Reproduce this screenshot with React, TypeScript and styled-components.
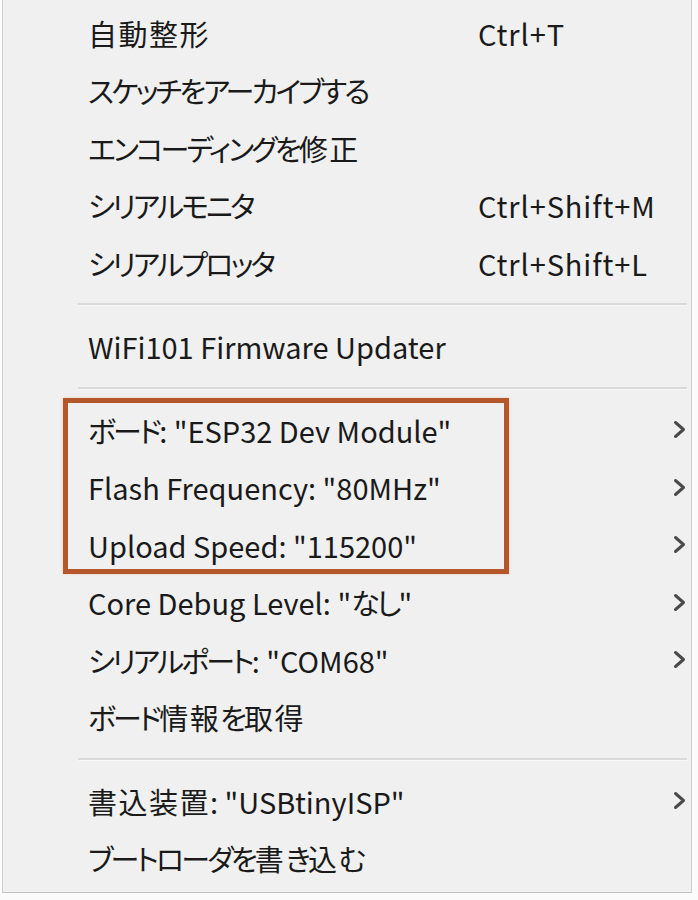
import React from "react";
import styled, { createGlobalStyle } from "styled-components";

const Global = createGlobalStyle`
  html, body { margin: 0; padding: 0; background: #fbfbfb; }
  body { font-family: "Noto Sans CJK JP", "Noto Sans", sans-serif; }
`;

const Menu = styled.div`
  margin-left: 2px;
  width: 690px;
  height: 893px;
  box-sizing: border-box;
  background: #f0f0f0;
  border-left: 1px solid #cfcfcf;
  border-right: 1px solid #cfcfcf;
  border-bottom: 1px solid #c4c4c4;
  padding-top: 4px;
  display: flex;
  flex-direction: column;
`;

const Row = styled.div`
  display: grid;
  grid-template-columns: 390px 1fr 30px;
  align-items: center;
  height: 57.5px;
  padding-left: 85px;
  font-size: 29px;
  color: #1a1a1a;
  font-feature-settings: "palt";
`;

const Label = styled.span`
  white-space: nowrap;
`;

const Run = styled.span<{ $kind: "kana" | "kanji" | "latin" }>`
  letter-spacing: ${(p) => (p.$kind === "kana" ? "-2.8px" : p.$kind === "kanji" ? "1.5px" : "0")};
`;

const Shortcut = styled.span`
  white-space: nowrap;
  letter-spacing: 0.9px;
`;

const Arrow = styled.span`
  display: flex;
  align-items: center;
  justify-content: flex-start;
  padding-left: 11px;
`;

const Separator = styled.div`
  height: 26px;
  display: flex;
  align-items: center;
  padding-left: 75px;
  padding-right: 4px;
  &::after {
    content: "";
    flex: 1;
    height: 2px;
    background: #d9d9d9;
    border-bottom: 1px solid #f7f7f7;
  }
`;

const Group = styled.div`
  position: relative;
`;

const Highlight = styled.div`
  position: absolute;
  left: 60px;
  top: -3px;
  width: 446px;
  height: 176px;
  box-sizing: border-box;
  border: 5px solid #b4582c;
  box-shadow: 0 0 2px rgba(240, 150, 100, 0.5);
  pointer-events: none;
`;

const Chevron = () => (
  <svg width="15" height="19" viewBox="0 0 15 19">
    <path d="M3.5 2.5 L11.5 9.5 L3.5 16.5" fill="none" stroke="#4a4a4a" strokeWidth="3" strokeLinecap="round" strokeLinejoin="round" />
  </svg>
);

const splitRuns = (text: string) => {
  const parts = text.match(/[\u3040-\u30ff]+|[\u4e00-\u9fff]+|[^\u3040-\u30ff\u4e00-\u9fff]+/g) ?? [];
  return parts.map((p, i) => {
    const kind = /[\u3040-\u30ff]/.test(p) ? "kana" : /[\u4e00-\u9fff]/.test(p) ? "kanji" : "latin";
    return (
      <Run key={i} $kind={kind}>
        {p}
      </Run>
    );
  });
};

type Item = { label: string; shortcut?: string; sub?: boolean };

const Entry = ({ label, shortcut, sub }: Item) => (
  <Row>
    <Label>{splitRuns(label)}</Label>
    <Shortcut>{shortcut ?? ""}</Shortcut>
    <Arrow>{sub ? <Chevron /> : null}</Arrow>
  </Row>
);

const top: Item[] = [
  { label: "自動整形", shortcut: "Ctrl+T" },
  { label: "スケッチをアーカイブする" },
  { label: "エンコーディングを修正" },
  { label: "シリアルモニタ", shortcut: "Ctrl+Shift+M" },
  { label: "シリアルプロッタ", shortcut: "Ctrl+Shift+L" },
];

const boxed: Item[] = [
  { label: "ボード: \"ESP32 Dev Module\"", sub: true },
  { label: "Flash Frequency: \"80MHz\"", sub: true },
  { label: "Upload Speed: \"115200\"", sub: true },
];

const rest: Item[] = [
  { label: "Core Debug Level: \"なし\"", sub: true },
  { label: "シリアルポート: \"COM68\"", sub: true },
  { label: "ボード情報を取得" },
];

const last: Item[] = [
  { label: "書込装置: \"USBtinyISP\"", sub: true },
  { label: "ブートローダを書き込む" },
];

export default function App() {
  return (
    <>
      <Global />
      <Menu>
        {top.map((i) => <Entry key={i.label} {...i} />)}
        <Separator />
        <Entry label="WiFi101 Firmware Updater" />
        <Separator />
        <Group>
          {boxed.map((i) => <Entry key={i.label} {...i} />)}
          <Highlight />
        </Group>
        {rest.map((i) => <Entry key={i.label} {...i} />)}
        <Separator />
        {last.map((i) => <Entry key={i.label} {...i} />)}
      </Menu>
    </>
  );
}
